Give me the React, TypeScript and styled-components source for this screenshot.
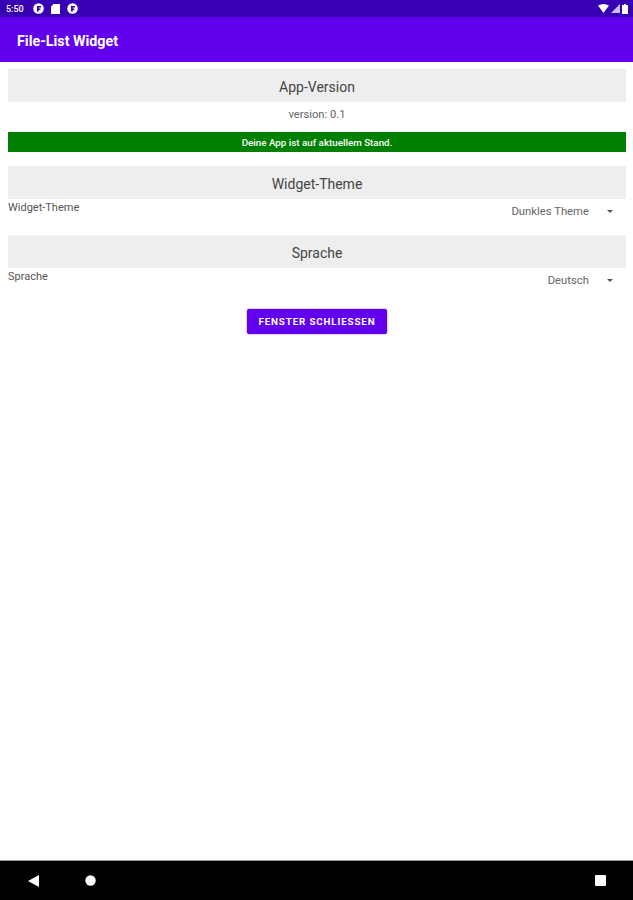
import * as React from "react";
import styled, { createGlobalStyle } from "styled-components";

// // // //

const GlobalStyle = createGlobalStyle`
    html, body {
        margin: 0;
        padding: 0;
        background: #ffffff;
        font-family: Roboto, "Liberation Sans", sans-serif;
    }
`;

const Screen = styled.div`
    width: 633px;
    height: 900px;
    display: flex;
    flex-direction: column;
    overflow: hidden;
`;

const StatusBar = styled.div`
    height: 17px;
    background: #3700b3;
    display: flex;
    align-items: center;
    justify-content: space-between;
    padding: 0 5px 0 6px;
    color: #ffffff;
`;

const StatusGroup = styled.div`
    display: flex;
    align-items: center;
    gap: 7px;
`;

const StatusTime = styled.span`
    font-size: 9px;
    font-weight: 500;
    margin-right: 2px;
`;

const StatusRight = styled.div`
    display: flex;
    align-items: center;
    gap: 2px;
`;

const AppBar = styled.div`
    height: 45px;
    background: #6200ee;
    display: flex;
    align-items: center;
    padding: 2px 0 0 17px;
    color: #ffffff;
    font-size: 14.3px;
    font-weight: 700;
    box-sizing: border-box;
`;

const Content = styled.main`
    flex: 1;
    display: flex;
    flex-direction: column;
    padding: 7px 7px 0 8px;
`;

const SectionHeader = styled.div`
    height: 33px;
    box-sizing: border-box;
    padding-top: 2px;
    background: #eeeeee;
    display: flex;
    align-items: center;
    justify-content: center;
    font-size: 14px;
    color: #444444;
`;

const VersionText = styled.div`
    height: 24px;
    margin-bottom: 6px;
    display: flex;
    align-items: center;
    justify-content: center;
    font-size: 11.2px;
    color: #666666;
`;

const UpdateBanner = styled.div`
    height: 20px;
    background: #008000;
    color: #ffffff;
    display: flex;
    align-items: center;
    justify-content: center;
    font-size: 9.8px;
    font-weight: 500;
    margin-bottom: 14px;
`;

const SettingRow = styled.div`
    height: 36px;
    display: flex;
    justify-content: space-between;
`;

const SettingLabel = styled.span`
    font-size: 11px;
    line-height: 17px;
    color: #555555;
`;

const SelectBox = styled.div`
    display: flex;
    align-items: center;
    height: 24px;
    padding-right: 13px;
    font-size: 11.3px;
    color: #666666;
`;

const Caret = styled.span`
    width: 0;
    height: 0;
    margin-left: 18px;
    border-left: 3.5px solid transparent;
    border-right: 3.5px solid transparent;
    border-top: 3.5px solid #555555;
`;

const ButtonRow = styled.div`
    display: flex;
    justify-content: center;
    padding-top: 5px;
`;

const CloseButton = styled.button`
    width: 140px;
    height: 25px;
    padding: 0;
    border: none;
    border-radius: 2px;
    background: #6200ee;
    color: #ffffff;
    font-family: inherit;
    font-size: 9.8px;
    font-weight: 700;
    letter-spacing: 0.85px;
    box-shadow: 0 0 2px rgba(98, 0, 238, 0.6);
`;

const NavBar = styled.nav`
    height: 39px;
    background: #000000;
    border-top: 1px solid #999999;
    margin-top: -1px;
    display: flex;
    align-items: center;
    justify-content: space-between;
    padding: 0 27px 0 28px;
`;

const NavLeft = styled.div`
    display: flex;
    align-items: center;
    gap: 46px;
`;

function AppGlyph() {
    return (
        <svg width="11" height="11" viewBox="0 0 11 11">
            <circle cx="5.5" cy="5.5" r="5.3" fill="#ffffff" />
            <path d="M4 8.5V3h4v1.6H5.8v1H7.4v1.5H5.8v1.4z" fill="#3700b3" />
        </svg>
    );
}

function SdCardGlyph() {
    return (
        <svg width="9" height="10" viewBox="0 0 9 10">
            <path d="M2.5 0H9v10H0V2.5z" fill="#ffffff" />
        </svg>
    );
}

export default function App() {
    return (
        <Screen>
            <GlobalStyle />
            <StatusBar>
                <StatusGroup>
                    <StatusTime>5:50</StatusTime>
                    <AppGlyph />
                    <SdCardGlyph />
                    <AppGlyph />
                </StatusGroup>
                <StatusRight>
                    <svg width="11" height="9" viewBox="0 0 11 9">
                        <path d="M0 1.5Q5.5-1.5 11 1.5L5.5 9z" fill="#ffffff" />
                    </svg>
                    <svg width="9" height="9" viewBox="0 0 9 9">
                        <path d="M9 0V9H0z" fill="#ffffff" opacity="0.75" />
                    </svg>
                    <svg width="6" height="10" viewBox="0 0 6 10">
                        <path d="M2 0H4V1H6V10H0V1H2z" fill="#ffffff" />
                    </svg>
                </StatusRight>
            </StatusBar>
            <AppBar>File-List Widget</AppBar>
            <Content>
                <SectionHeader>App-Version</SectionHeader>
                <VersionText>version: 0.1</VersionText>
                <UpdateBanner>Deine App ist auf aktuellem Stand.</UpdateBanner>
                <SectionHeader>Widget-Theme</SectionHeader>
                <SettingRow>
                    <SettingLabel>Widget-Theme</SettingLabel>
                    <SelectBox>
                        Dunkles Theme
                        <Caret />
                    </SelectBox>
                </SettingRow>
                <SectionHeader>Sprache</SectionHeader>
                <SettingRow>
                    <SettingLabel>Sprache</SettingLabel>
                    <SelectBox>
                        Deutsch
                        <Caret />
                    </SelectBox>
                </SettingRow>
                <ButtonRow>
                    <CloseButton>FENSTER SCHLIESSEN</CloseButton>
                </ButtonRow>
            </Content>
            <NavBar>
                <NavLeft>
                    <svg width="11" height="12" viewBox="0 0 11 12">
                        <path d="M11 0V12L0 6z" fill="#ffffff" />
                    </svg>
                    <svg width="11" height="11" viewBox="0 0 11 11">
                        <circle cx="5.5" cy="5.5" r="5.2" fill="#ffffff" />
                    </svg>
                </NavLeft>
                <svg width="11" height="11" viewBox="0 0 11 11">
                    <rect width="11" height="11" rx="1" fill="#ffffff" />
                </svg>
            </NavBar>
        </Screen>
    );
}
